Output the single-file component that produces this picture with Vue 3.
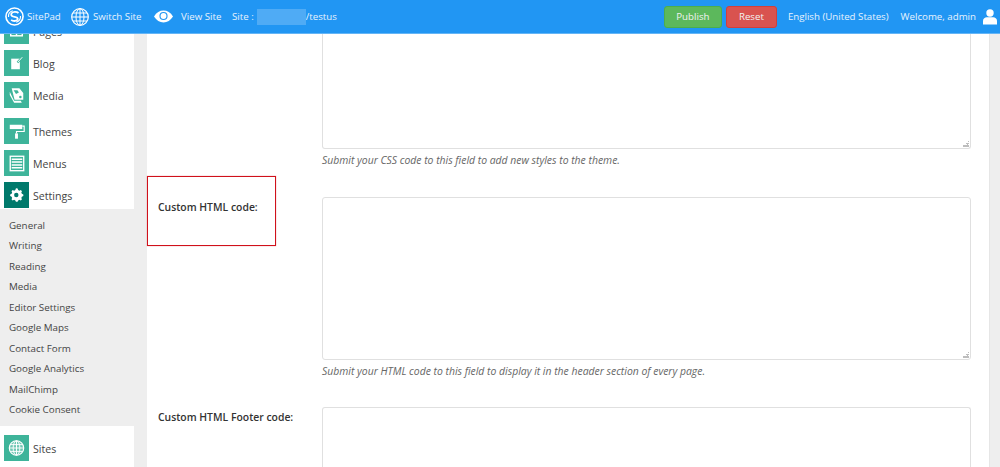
<script setup>
const groupA = [
  { name: 'Pages', icon: 'pages' },
  { name: 'Blog', icon: 'blog' },
  { name: 'Media', icon: 'media' }
]
const groupB = [
  { name: 'Themes', icon: 'themes' },
  { name: 'Menus', icon: 'menus' },
  { name: 'Settings', icon: 'settings', active: true }
]
const sub = ['General', 'Writing', 'Reading', 'Media', 'Editor Settings', 'Google Maps', 'Contact Form', 'Google Analytics', 'MailChimp', 'Cookie Consent']
</script>

<template>
  <div class="page">
    <header class="topbar">
      <a class="brand">
        <svg class="logo" viewBox="0 0 20 20" fill="none" stroke="#fff">
          <circle cx="10" cy="10" r="9" stroke-width="1.700" />
          <path d="M14.200 6.300C12.400 4.700 7.800 4.600 6.700 7c-1 2.300 1.600 3 3.500 3.300 2 .3 3.900 1.200 3 3-1 1.900-5 1.800-6.700.3" stroke-width="1.900" />
          <path d="M16.300 9.500c.3 3.300-2 5.800-4.500 6.500M3.700 10.500c-.3-3.300 2-5.800 4.500-6.500" stroke-width="1.200" />
        </svg>
        <span>SitePad</span>
      </a>
      <a class="nav switch">
        <svg class="globe" viewBox="0 0 18 18" fill="none" stroke="#fff" stroke-width="1">
          <circle cx="9" cy="9" r="8.300" stroke-width="1.200" />
          <ellipse cx="9" cy="9" rx="4" ry="8.300" />
          <path d="M9 1v16M1 9h16M2 5h14M2 13h14" />
        </svg>
        <span>Switch Site</span>
      </a>
      <a class="nav view">
        <svg class="eye" viewBox="0 0 20 13">
          <path d="M0 6.500C2.600 2.400 6 .3 10 .3s7.400 2.100 10 6.200c-2.600 4.100-6 6.200-10 6.200S2.600 10.600 0 6.500z" fill="#fff" />
          <circle cx="10" cy="6" r="4.300" fill="#2196f3" />
          <circle cx="10" cy="6" r="3.100" fill="#fff" />
        </svg>
        <span>View Site</span>
      </a>
      <div class="site">
        <span>Site :</span><span class="blur"></span><span>/testus</span>
      </div>
      <div class="actions">
        <button class="btn publish">Publish</button>
        <button class="btn reset">Reset</button>
        <span class="lang">English (United States)</span>
        <span class="welcome">Welcome, admin</span>
        <svg class="user" viewBox="0 0 14 16" fill="#fff">
          <circle cx="7" cy="4" r="3.700" />
          <path d="M0 15.500V12c0-2.400 2-3.700 3.800-3.700h6.400C12 8.300 14 9.600 14 12v3.500z" />
        </svg>
      </div>
    </header>

    <div class="body">
      <aside class="sidebar">
        <ul class="menu first">
          <li v-for="item in groupA" :key="item.name" class="item">
            <span class="tile">
              <svg viewBox="0 0 26 26" class="glyph">
                <g v-if="item.icon === 'pages'" fill="none" stroke="#fff" stroke-width="1.500">
                  <rect x="7" y="8" width="12" height="10" />
                  <path d="M7 13h12M13 8v10" />
                </g>
                <g v-else-if="item.icon === 'blog'">
                  <path d="M7.500 8.500h9v11h-9z" fill="#fff" />
                  <path d="M14 12.500l5-5.500" stroke="#3eb49a" stroke-width="2.200" />
                  <path d="M14.500 12l4.500-5" stroke="#fff" stroke-width="1" />
                </g>
                <g v-else fill="#fff">
                  <path d="M8 6h8l4 5v7h-9z" />
                  <path d="M6 9.500l4.500 9.500h7l1 2h-8L6 13z" />
                  <path d="M10 8h4l1.500 2.500-3 1.500z" fill="#3eb49a" />
                  <circle cx="17" cy="15" r="1.300" fill="#3eb49a" />
                </g>
              </svg>
            </span>
            <span class="label">{{ item.name }}</span>
          </li>
        </ul>
        <ul class="menu second">
          <li v-for="item in groupB" :key="item.name" class="item" :class="{ active: item.active }">
            <span class="tile">
              <svg viewBox="0 0 26 26" class="glyph">
                <g v-if="item.icon === 'themes'">
                  <path d="M6 6.500h13v4.500H6z" fill="#fff" />
                  <path d="M19 8h2v5.500h-8v2" fill="none" stroke="#fff" stroke-width="1.200" />
                  <path d="M11.500 15.500h3V21h-3z" fill="#fff" />
                </g>
                <g v-else-if="item.icon === 'menus'">
                  <rect x="6.500" y="6" width="14" height="15" fill="none" stroke="#fff" stroke-width="1.400" />
                  <path d="M8 9h11M8 12h11M8 15h11M8 18h11" stroke="#fff" stroke-width="1.500" />
                </g>
                <g v-else>
                  <path d="M13 7.500l1.600.3.500 1.600 1.300.6 1.500-.7 1.200 1.200-.7 1.500.6 1.300 1.500.6v1.700l-1.500.6-.6 1.300.7 1.500-1.200 1.200-1.500-.7-1.300.6-.6 1.500h-1.700l-.6-1.500-1.300-.6-1.500.7-1.200-1.200.7-1.500-.6-1.300-1.500-.6v-1.700l1.500-.6.600-1.300-.7-1.500 1.200-1.200 1.500.7 1.300-.6.500-1.600z" fill="#fff" transform="translate(-.4 -1.500)" />
                  <circle cx="12.800" cy="13" r="2.300" fill="#00796b" />
                </g>
              </svg>
            </span>
            <span class="label">{{ item.name }}</span>
          </li>
        </ul>
        <ul class="submenu">
          <li v-for="s in sub" :key="s">{{ s }}</li>
        </ul>
        <ul class="menu third">
          <li class="item">
            <span class="tile">
              <svg viewBox="0 0 26 26" class="glyph" fill="none" stroke="#fff" stroke-width="1">
                <circle cx="13" cy="13" r="7.500" fill="#fff" fill-opacity=".25" stroke-width="1.200" />
                <ellipse cx="13" cy="13" rx="3.500" ry="7.500" />
                <path d="M13 5.500v15M5.500 13h15M6.500 9.500h13M6.500 16.500h13" />
              </svg>
            </span>
            <span class="label">Sites</span>
          </li>
        </ul>
      </aside>

      <main class="content">
        <section class="row css-row">
          <div class="field">
            <div class="box first-box">
              <svg class="grip" viewBox="0 0 6 6" fill="#bdbdbd"><path d="M5 0h1v1H5zM3 2h3v1H3zM4 2h1v2H4zM0 4h6v2H0zM1 5h1v1H1z" /></svg>
            </div>
            <p class="hint">Submit your CSS code to this field to add new styles to the theme.</p>
          </div>
        </section>
        <section class="row html-row">
          <div class="label-cell">
            <label>Custom HTML code:</label>
          </div>
          <div class="field">
            <div class="box second-box">
              <svg class="grip" viewBox="0 0 6 6" fill="#bdbdbd"><path d="M5 0h1v1H5zM3 2h3v1H3zM4 2h1v2H4zM0 4h6v2H0zM1 5h1v1H1z" /></svg>
            </div>
            <p class="hint">Submit your HTML code to this field to display it in the header section of every page.</p>
          </div>
        </section>
        <section class="row footer-row">
          <div class="label-cell plain">
            <label>Custom HTML Footer code:</label>
          </div>
          <div class="field">
            <div class="box third-box"></div>
          </div>
        </section>
      </main>
      <div class="rail"></div>
    </div>
  </div>
</template>

<style>
html, body { margin: 0; overflow: hidden; background: #eeeeee; }
</style>

<style scoped>
.page {
  width: 1000px;
  height: 467px;
  overflow: hidden;
  position: relative;
  font-family: "Open Sans", sans-serif;
  font-size: 11px;
  color: #444;
  background: #eee;
}
.topbar {
  position: absolute;
  top: 0; left: 0; right: 0;
  height: 33px;
  z-index: 5;
  background: #2196f3;
  border-bottom: 1px solid #64b5f6;
  color: #e8f3fd;
  display: flex;
  align-items: center;
  font-size: 9.7px;
}
.brand { display: flex; align-items: center; margin-left: 5px; gap: 3px; width: 66px; }
.logo { width: 19px; height: 19px; }
.nav { display: flex; align-items: center; }
.switch { width: 83px; gap: 4px; }
.globe { width: 18px; height: 18px; }
.view { width: 78px; gap: 8px; }
.eye { width: 19px; height: 13px; }
.site { display: flex; align-items: center; white-space: nowrap; }
.blur { width: 49px; height: 16px; margin: 0 0 0 3px; background: #4fabf5; filter: blur(.6px); }
.actions { margin-left: auto; display: flex; align-items: center; margin-right: 3px; }
.btn {
  height: 22px;
  border: 1px solid transparent;
  border-radius: 3px;
  padding: 0;
  font: inherit;
  color: #f2f2f2;
}
.publish { width: 58px; background: #5cb85c; border-color: #4cae4c; margin-right: 4px; }
.reset { width: 51px; background: #d9534f; border-color: #d43f3a; margin-right: 11px; }
.lang { margin-right: 12px; }
.welcome { margin-right: 7px; }
.user { width: 14px; height: 16px; }

.body { display: flex; height: 467px; }
.sidebar { width: 134px; flex: none; background: #fff; padding-top: 18px; box-sizing: border-box; }
ul { list-style: none; margin: 0; padding: 0; }
.menu { background: #fff; }
.item { display: flex; align-items: center; height: 26px; margin-bottom: 6px; padding-left: 4px; font-size: 10.6px; color: #444; }
.tile { width: 25px; height: 26px; background: #3eb49a; display: flex; flex: none; }
.glyph { width: 25px; height: 26px; }
.label { margin-left: 4px; padding-top: 2px; }
.second { margin-top: 10px; }
.second .item:last-child { margin-bottom: 1px; }
.active .tile { background: #00796b; }
.submenu { background: #eee; height: 217px; padding: 6.500px 0 0 9px; box-sizing: border-box; font-size: 9.8px; line-height: 20.5px; color: #444; }
.third { padding-top: 9px; }

.content { flex: none; width: 843px; margin-left: 13px; background: #fff; border-right: 1px solid #e6e6e6; box-sizing: border-box; }
.rail { flex: 1; background: #eee; }
.row { display: flex; position: relative; }
.field { margin-left: 175px; width: 649px; }
.label-cell + .field { margin-left: 0; }
.box { border: 1px solid #e0e0e0; border-radius: 3px; box-sizing: border-box; background: #fff; position: relative; }
.first-box { height: 149px; border-top: 0; border-radius: 0 0 3px 3px; }
.second-box { height: 163px; }
.third-box { height: 80px; border-bottom: 0; }
.grip { position: absolute; right: 1px; bottom: 1px; width: 6px; height: 6px; }
.hint { margin: 0; height: 27px; line-height: 22px; font-style: italic; color: #666; font-size: 10.4px; }
.html-row { height: 209px; }
.css-row { height: 176px; }
.label-cell { width: 175px; flex: none; box-sizing: border-box; }
.label-cell label { font-weight: 600; font-size: 10.4px; color: #333; }
.html-row .label-cell { position: relative; padding: 23px 0 0 11px; }
.html-row .label-cell::before {
  content: '';
  position: absolute;
  left: 0; top: 0;
  width: 129px; height: 70px;
  border: 1px solid #d0111b;
  box-shadow: 0 0 1px rgba(208, 17, 27, .5);
  box-sizing: border-box;
}
.html-row .field { padding-top: 21px; }
.footer-row .label-cell { padding: 2px 0 0 11px; }
.footer-row { margin-top: 22px; }
</style>
